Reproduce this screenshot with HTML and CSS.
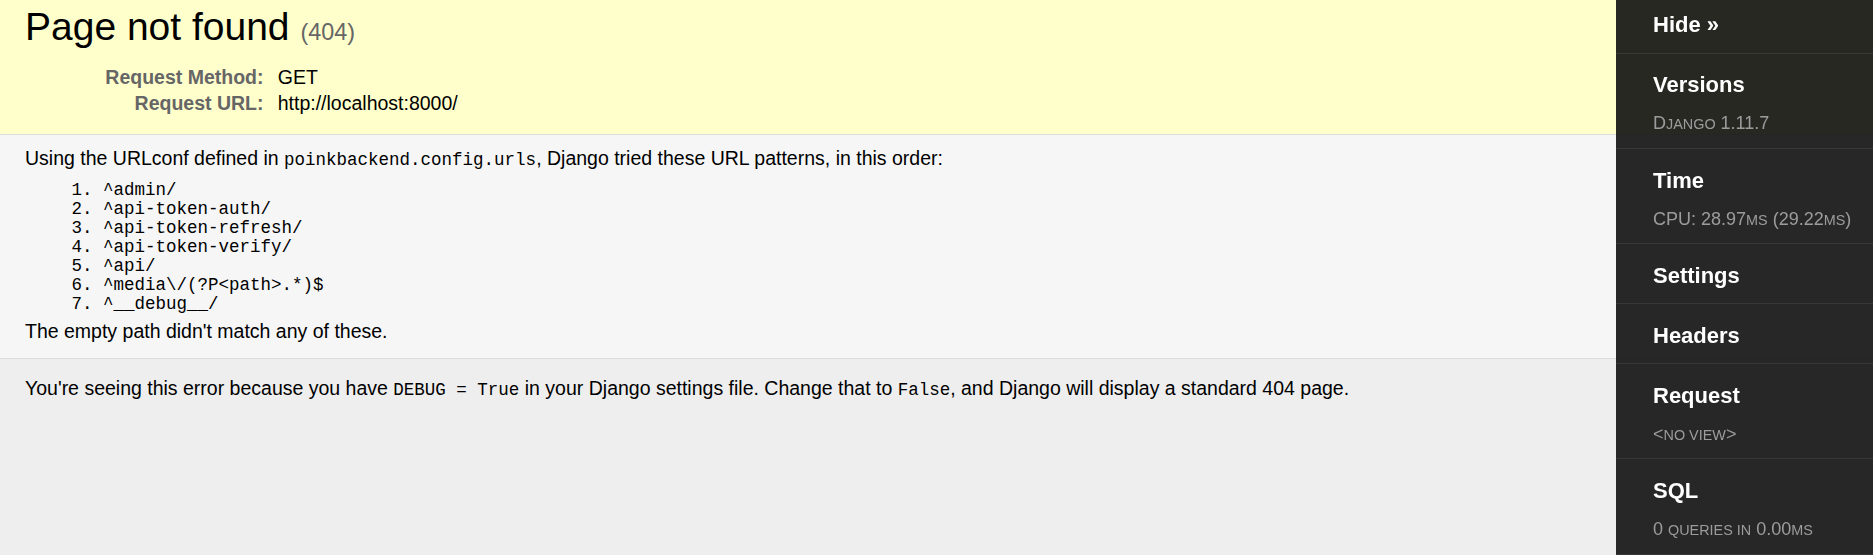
FILE: index.html
```html
<!DOCTYPE html>
<html lang="en">
<head>
<meta charset="utf-8">
<title>Page not found at /</title>
<link rel="stylesheet" href="styles.css">
</head>
<body>
<div class="summary">
  <h1 class="title">Page not found <span class="status">(404)</span></h1>
  <table class="req">
    <tr><th>Request Method:</th><td>GET</td></tr>
    <tr><th>Request URL:</th><td>http://localhost:8000/</td></tr>
  </table>
</div>
<div class="info">
  <p class="line">Using the URLconf defined in <code class="mono">poinkbackend.config.urls</code>, Django tried these URL patterns, in this order:</p>
  <ol class="patterns">
    <li>^admin/</li>
    <li>^api-token-auth/</li>
    <li>^api-token-refresh/</li>
    <li>^api-token-verify/</li>
    <li>^api/</li>
    <li>^media\/(?P&lt;path&gt;.*)$</li>
    <li>^__debug__/</li>
  </ol>
  <p class="line">The empty path didn't match any of these.</p>
</div>
<div class="explanation">
  <p class="line">You're seeing this error because you have <code class="mono">DEBUG = True</code> in your Django settings file. Change that to <code class="mono">False</code>, and Django will display a standard 404 page.</p>
</div>
<div class="djdt">
  <ul class="djdt-panels">
    <li class="djdt-row djdt-hide"><span class="djdt-title">Hide »</span></li>
    <li class="djdt-row"><span class="djdt-title">Versions</span><span class="djdt-sub">D<span class="sc">jango</span> 1.11.7</span></li>
    <li class="djdt-row"><span class="djdt-title">Time</span><span class="djdt-sub">CPU: 28.97<span class="sc">ms</span> (29.22<span class="sc">ms</span>)</span></li>
    <li class="djdt-row"><span class="djdt-title">Settings</span></li>
    <li class="djdt-row"><span class="djdt-title">Headers</span></li>
    <li class="djdt-row"><span class="djdt-title">Request</span><span class="djdt-sub">&lt;<span class="sc">no view</span>&gt;</span></li>
    <li class="djdt-row"><span class="djdt-title">SQL</span><span class="djdt-sub">0 <span class="sc">queries in</span> 0.00<span class="sc">ms</span></span></li>
  </ul>
</div>
</body>
</html>
```
FILE: styles.css
```css
html, body {
  margin: 0;
  padding: 0;
}
body {
  font-family: "Liberation Sans", Arial, Helvetica, sans-serif;
  font-size: 19.5px;
  line-height: 22px;
  background: #eee;
  color: #000;
  min-height: 555px;
}
.summary {
  background: #ffc;
  border-bottom: 1px solid #ddd;
  padding: 4px 25px 18px;
}
.title {
  margin: 0 0 9px;
  font-size: 39px;
  line-height: 46px;
  font-weight: normal;
}
.status {
  font-size: 60%;
  color: #666;
}
.req {
  border: none;
  border-collapse: collapse;
}
.req th, .req td {
  padding: 2px 4.5px;
  vertical-align: top;
  line-height: 22px;
}
.req th {
  width: 234px;
  text-align: right;
  color: #666;
  padding-right: 9.75px;
  font-weight: bold;
}
.info {
  background: #f6f6f6;
  border-bottom: 1px solid #ddd;
  padding: 12px 25px 16px;
}
.line {
  margin: 0;
}
.patterns {
  margin: 9.75px 0 6px 78px;
  padding: 0;
  font-family: "Liberation Mono", "Courier New", monospace;
  font-size: 17.5px;
  line-height: 19.1px;
}
.mono {
  font-family: "Liberation Mono", "Courier New", monospace;
  font-size: 17.5px;
}
.explanation {
  padding: 18px 25px 12px;
}
.djdt {
  position: fixed;
  top: 0;
  right: 0;
  bottom: 0;
  width: 257px;
  background: rgba(17, 17, 17, 0.9);
}
.djdt-panels {
  list-style: none;
  margin: 0;
  padding: 0;
}
.djdt-row {
  display: flex;
  flex-direction: column;
  padding: 16.5px 10px 12.6px 37px;
  border-bottom: 1px solid rgba(255, 255, 255, 0.08);
}
.djdt-hide {
  padding-top: 10.4px;
}
.djdt-title {
  font-weight: bold;
  font-size: 22px;
  line-height: 30px;
  color: #fff;
}
.djdt-sub {
  font-size: 18px;
  line-height: 24px;
  margin-top: 11px;
  color: #9c9c9c;
}
.sc {
  text-transform: uppercase;
  font-size: 0.8em;
  line-height: 1;
}
```
